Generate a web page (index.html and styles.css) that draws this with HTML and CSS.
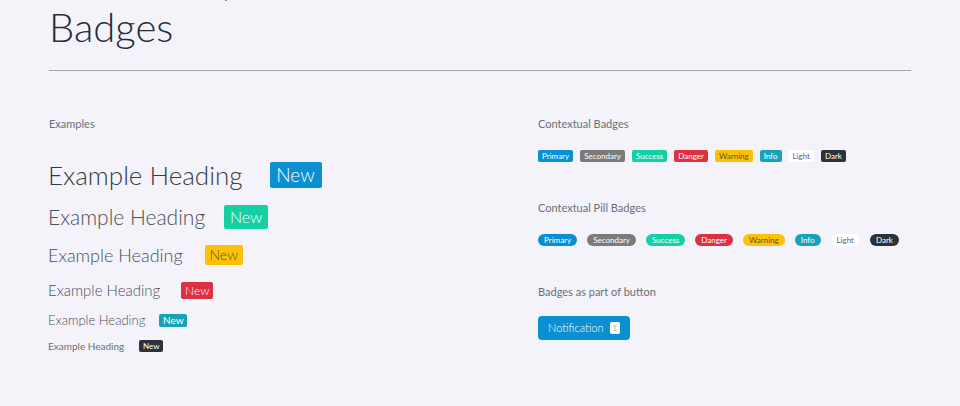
FILE: index.html
```html
<!DOCTYPE html>
<html lang="en">
<head>
<meta charset="utf-8">
<title>Badges</title>
<link rel="stylesheet" href="styles.css">
</head>
<body>
<main class="page">
  <span class="clip-mark" aria-hidden="true"></span>
  <h1 class="title">Badges</h1>
  <div class="columns">
    <section class="examples">
      <h2 class="label">Examples</h2>
      <div class="heading h-1">Example Heading <span class="badge primary">New</span></div>
      <div class="heading h-2">Example Heading <span class="badge success">New</span></div>
      <div class="heading h-3">Example Heading <span class="badge warning">New</span></div>
      <div class="heading h-4">Example Heading <span class="badge danger">New</span></div>
      <div class="heading h-5">Example Heading <span class="badge info">New</span></div>
      <div class="heading h-6">Example Heading <span class="badge dark">New</span></div>
    </section>
    <div class="variants">
      <section class="group">
        <h2 class="label">Contextual Badges</h2>
        <div class="row">
          <span class="badge small primary">Primary</span>
          <span class="badge small secondary">Secondary</span>
          <span class="badge small success">Success</span>
          <span class="badge small danger">Danger</span>
          <span class="badge small warning">Warning</span>
          <span class="badge small info">Info</span>
          <span class="badge small light">Light</span>
          <span class="badge small dark">Dark</span>
        </div>
      </section>
      <section class="group">
        <h2 class="label">Contextual Pill Badges</h2>
        <div class="row pills">
          <span class="badge small pill primary">Primary</span>
          <span class="badge small pill secondary">Secondary</span>
          <span class="badge small pill success">Success</span>
          <span class="badge small pill danger">Danger</span>
          <span class="badge small pill warning">Warning</span>
          <span class="badge small pill info">Info</span>
          <span class="badge small pill light">Light</span>
          <span class="badge small pill dark">Dark</span>
        </div>
      </section>
      <section class="group with-button">
        <h2 class="label">Badges as part of button</h2>
        <button class="button" type="button">Notification <span class="badge count light">1</span></button>
      </section>
    </div>
  </div>
</main>
</body>
</html>
```
FILE: styles.css
```css
* { box-sizing: border-box; }
body {
  margin: 0;
  background: #f4f3f9;
  color: #49515a;
  font-family: Lato, "Open Sans", sans-serif;
  font-weight: 300;
}
.page { position: relative; padding: 0 49px; }
.clip-mark {
  position: absolute;
  top: 0;
  left: 225px;
  width: 2px;
  height: 1px;
  background: #8b9097;
}
.title {
  margin: 0;
  padding: 2px 0 18px;
  border-bottom: 1px solid #a3a7b0;
  color: #252d36;
  font-size: 40px;
  font-weight: 300;
  line-height: 50px;
}
.columns {
  display: grid;
  grid-template-columns: 489fr 373fr;
  padding-top: 45px;
}
.label {
  margin: 0;
  color: #6a7077;
  font-size: 11px;
  font-weight: 400;
  line-height: 16px;
}
.examples { margin-left: -1px; }
.examples .label { margin: 0 0 30px 1px; }
.heading { display: flex; align-items: center; }
.h-1 { gap: 27px; margin-bottom: 17px; font-size: 26px; line-height: 26px; color: #343c45; }
.h-2 { gap: 19px; margin-bottom: 16px; font-size: 21px; line-height: 24px; }
.h-3 { gap: 22px; margin-bottom: 17px; font-size: 18px; line-height: 20px; }
.h-4 { gap: 21px; margin-bottom: 15px; font-size: 15px; line-height: 17px; }
.h-5 { gap: 14px; margin-bottom: 13px; font-size: 13px; line-height: 13px; }
.h-6 { gap: 15px; font-size: 10px; font-weight: 400; line-height: 12px; color: #6a7077; }
.badge {
  border-radius: 2px;
  color: #fff;
  text-align: center;
  white-space: nowrap;
}
.h-1 .badge { min-width: 52px; font-size: 19px; }
.h-2 .badge { min-width: 44px; font-size: 16px; }
.h-3 .badge { min-width: 38px; font-size: 14px; }
.h-4 .badge { min-width: 32px; font-size: 12px; }
.h-5 .badge { min-width: 28px; font-size: 10px; font-weight: 400; }
.h-6 .badge { min-width: 24px; font-size: 8px; }
.row { display: flex; gap: 7px; }
.pills { gap: 10px; }
.group + .group { margin-top: 38px; }
.group .label { margin-bottom: 18px; }
.with-button .label { margin-bottom: 16px; }
.small { padding: 0 4px; font-size: 8px; font-weight: 400; line-height: 12px; }
.small.pill { padding: 0 6px; border-radius: 6px; }
.primary { background: #098fd2; }
.secondary { background: #7b7b7b; }
.success { background: #16d0a5; }
.danger { background: #dc3043; }
.warning { background: #ffc107; color: #5a5334; }
.info { background: #17a2b8; }
.light { background: #fff; color: #60656a; }
.dark { background: #2b323a; }
.button {
  display: inline-flex;
  align-items: center;
  gap: 6px;
  padding: 0 10px;
  border: 0;
  border-radius: 4px;
  background: #098fd2;
  color: #fff;
  font: 300 11px/24px Lato, "Open Sans", sans-serif;
}
.count { padding: 0 3px; font-size: 8px; line-height: 12px; }
```
